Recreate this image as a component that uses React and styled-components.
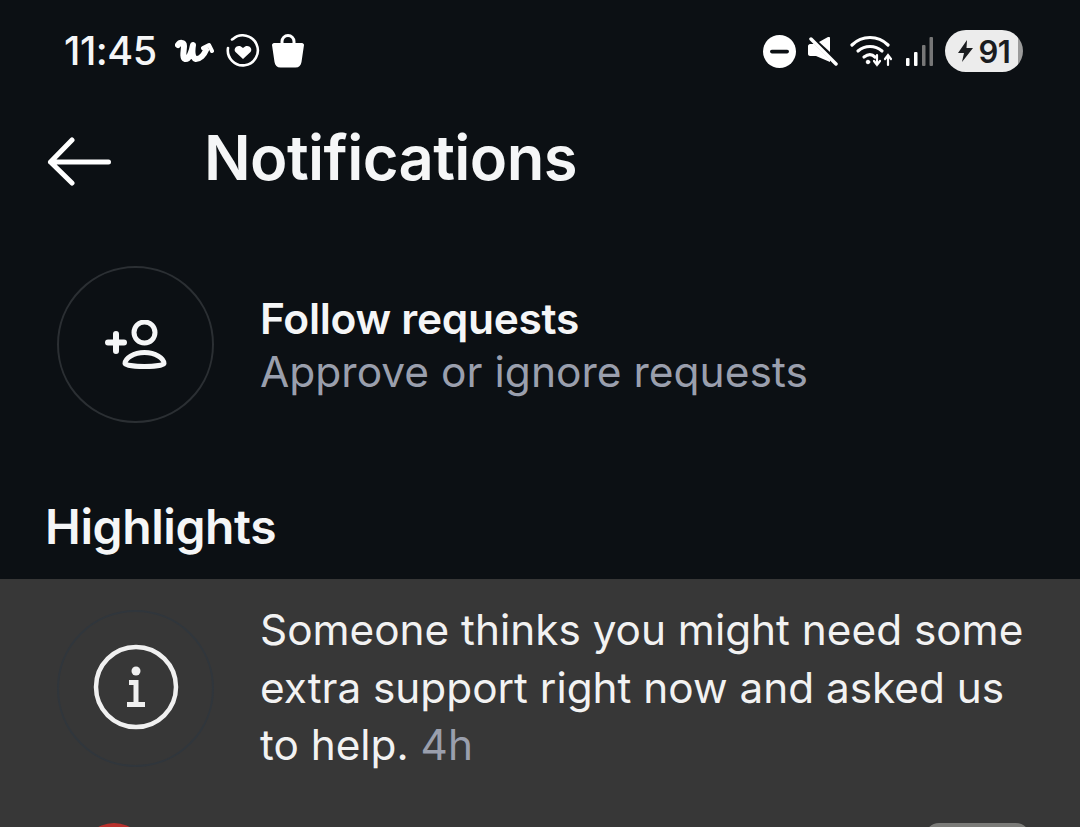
import React from "react";
import styled, { createGlobalStyle } from "styled-components";

const GlobalStyle = createGlobalStyle`
    html, body {
        margin: 0;
        padding: 0;
        background: #0c1014;
    }
`;

const Page = styled.div`
    width: 1080px;
    height: 827px;
    overflow: hidden;
    background: #0c1014;
    color: #f5f6f7;
    font-family: Inter, Roboto, sans-serif;
`;

const StatusBar = styled.div`
    height: 102px;
    padding: 0 57px 0 64px;
    box-sizing: border-box;
    display: flex;
    align-items: center;
    justify-content: space-between;
`;

const LeftIcons = styled.div`
    display: flex;
    align-items: center;
    gap: 12px;
`;

const RightIcons = styled.div`
    display: flex;
    align-items: center;
    gap: 12px;
`;

const Clock = styled.span`
    font-size: 39.5px;
    font-weight: 500;
    letter-spacing: -0.5px;
    margin-right: 6px;
`;

const Battery = styled.div`
    width: 78px;
    height: 42px;
    border-radius: 21px;
    background: linear-gradient(90deg, #ececec 93%, #9b9b9b 93%);
    color: #1a1c1f;
    display: flex;
    align-items: center;
    justify-content: center;
    gap: 6px;
    font-size: 31px;
    font-weight: 600;
    letter-spacing: -0.5px;
`;

const Header = styled.div`
    height: 112px;
    padding-left: 47px;
    display: flex;
    align-items: center;
    gap: 93px;
`;

const Title = styled.h1`
    margin: 0;
    font-size: 61.5px;
    font-weight: 600;
    letter-spacing: -0.6px;
    line-height: 1;
`;

const Row = styled.div`
    display: flex;
    align-items: center;
    gap: 46px;
    padding-left: 57px;
`;

const FollowRow = styled(Row)`
    margin-top: 52px;
`;

const Circle = styled.div`
    width: 157px;
    height: 157px;
    flex: none;
    box-sizing: border-box;
    border-radius: 50%;
    border: 2px solid ${({ $line }) => $line};
    display: flex;
    align-items: center;
    justify-content: center;
`;

const RowTitle = styled.div`
    font-size: 42.5px;
    font-weight: 600;
    letter-spacing: -0.3px;
    line-height: 53px;
`;

const RowSub = styled.div`
    font-size: 42.5px;
    line-height: 53px;
    color: #9a9fad;
`;

const SectionTitle = styled.h2`
    margin: 77px 0 0 45px;
    font-size: 48px;
    font-weight: 600;
    letter-spacing: -0.4px;
    line-height: 53px;
`;

const Highlight = styled.div`
    margin-top: 26px;
    height: 260px;
    background: #373737;
    position: relative;
`;

const HighlightRow = styled(Row)`
    padding-top: 22px;
    align-items: flex-start;
`;

const HighlightIcon = styled(Circle)`
    margin-top: 9px;

    svg {
        filter: blur(0.7px);
        margin-bottom: 3px;
    }
`;

const Message = styled.div`
    font-size: 42.3px;
    line-height: 57.5px;
    color: #f2f2f2;
    width: 780px;
`;

const Time = styled.span`
    color: #9a9fad;
`;

const PeekRow = styled.div`
    position: absolute;
    left: 0;
    right: 0;
    top: 244px;
    padding: 0 50px 0 81px;
    display: flex;
    justify-content: space-between;
`;

const PeekAvatar = styled.div`
    width: 66px;
    height: 66px;
    border-radius: 50%;
    background: #b8302c;
`;

const PeekButton = styled.div`
    width: 105px;
    height: 60px;
    border-radius: 14px;
    background: #7b7b78;
`;

const WovenLogo = () => (
    <svg width="39" height="28" viewBox="0 0 39 28" fill="none" stroke="#fff" strokeLinecap="round" strokeLinejoin="round">
        <path d="M3 8c2-3 6-3 6 1 0 4-2 12 1 13 4 1 7-8 8-14-1 6-1 13 3 14 4 0 8-4 10-9" strokeWidth="6" />
        <path d="M28 11l6-3 3 6" strokeWidth="4" />
    </svg>
);

const HeartRing = () => (
    <svg width="34" height="34" viewBox="0 0 34 34" fill="none">
        <path d="M7 5a15 15 0 1 1-5 9M9 3.500l-3 2" stroke="#fff" strokeWidth="2.600" strokeLinecap="round" />
        <path d="M17 25l-7.500-7c-3-4 3-9 7.500-4 4.500-5 10.500 0 7.500 4z" fill="#fff" />
    </svg>
);

const Bag = () => (
    <svg width="32" height="34" viewBox="0 0 32 34">
        <path d="M10 11V7.500a6 6 0 0 1 12 0V11" fill="none" stroke="#fff" strokeWidth="3" />
        <path d="M2 9h28c1 0 2 1 2 2l-2.500 17c-.5 3.500-2.500 5.500-6 5.500h-15c-3.500 0-5.500-2-6-5.500L0 11c0-1 1-2 2-2z" fill="#fff" />
    </svg>
);

const DoNotDisturb = () => (
    <svg width="33" height="33" viewBox="0 0 33 33">
        <circle cx="16.500" cy="16.500" r="16.500" fill="#fff" />
        <rect x="7" y="14.800" width="19" height="3.600" rx="1.800" fill="#0c1014" />
    </svg>
);

const Muted = () => (
    <svg width="30" height="29" viewBox="0 0 30 29">
        <path d="M0 9c0-1 1-2 2-2h4l16 16v2L8 19H2c-1 0-2-1-2-2z" fill="#fff" />
        <path d="M11 5l9-5c1-.5 2 0 2 1v14z" fill="#fff" />
        <path d="M3 2l25 25" stroke="#fff" strokeWidth="3.500" strokeLinecap="round" />
    </svg>
);

const Wifi = () => (
    <svg width="44" height="32" viewBox="0 0 44 32" fill="none" stroke="#fff" strokeLinecap="round">
        <path d="M2 10C12 0 28 0 38 10" strokeWidth="3.200" />
        <path d="M8 16c7-6 17-6 24 0" strokeWidth="3.200" />
        <path d="M14 22c4-3 8-3 11 0" strokeWidth="3.200" />
        <circle cx="18" cy="27" r="1.800" fill="#fff" strokeWidth="1" />
        <path d="M27 20v10M24 26l3 4 3-4" strokeWidth="2.200" />
        <path d="M38 30V20M35 24l3-4 3 4" strokeWidth="2.200" />
    </svg>
);

const Signal = () => (
    <svg width="27" height="30" viewBox="0 0 27 30">
        <rect x="0" y="22" width="3.500" height="8" fill="#fff" rx="1" />
        <rect x="8" y="16" width="3.500" height="14" fill="#fff" rx="1" />
        <rect x="16" y="9" width="3.500" height="21" fill="#777" rx="1" />
        <rect x="23.500" y="1" width="3.500" height="29" fill="#777" rx="1" />
    </svg>
);

const Bolt = () => (
    <svg width="15" height="22" viewBox="0 0 15 22">
        <path d="M9 0L0 13h6l-2 9L15 8H8.500z" fill="#1a1c1f" />
    </svg>
);

const BackArrow = () => (
    <svg width="64" height="58" viewBox="0 0 64 58" fill="none" stroke="#fff" strokeWidth="5" strokeLinecap="round" strokeLinejoin="round">
        <path d="M25 11L3.500 33 25 54M3.500 33h58" />
    </svg>
);

const AddPerson = () => (
    <svg width="62" height="49" viewBox="0 0 62 49" fill="none" stroke="#f5f6f7" strokeWidth="5" strokeLinecap="round">
        <circle cx="39.500" cy="12.500" r="10.500" />
        <path d="M39.500 32.500c11 0 19.500 6 19.500 11 0 1.500-9 3-19.500 3s-19.500-1.500-19.500-3c0-5 8.500-11 19.500-11z" />
        <path d="M11 14v17M3 22.500h16" strokeWidth="6" />
    </svg>
);

const InfoIcon = () => (
    <svg width="86" height="86" viewBox="0 0 86 86" fill="none" stroke="#f0f0f0">
        <circle cx="43" cy="43" r="40" strokeWidth="4.500" />
        <circle cx="43" cy="27" r="4.500" fill="#f0f0f0" stroke="none" />
        <path d="M36 38.500h7v22M34 60.500h18" strokeWidth="5" />
    </svg>
);

const App = () => (
    <Page>
        <GlobalStyle />
        <StatusBar>
            <LeftIcons>
                <Clock>11:45</Clock>
                <WovenLogo />
                <HeartRing />
                <Bag />
            </LeftIcons>
            <RightIcons>
                <DoNotDisturb />
                <Muted />
                <Wifi />
                <Signal />
                <Battery>
                    <Bolt />
                    <span>91</span>
                </Battery>
            </RightIcons>
        </StatusBar>
        <Header>
            <BackArrow />
            <Title>Notifications</Title>
        </Header>
        <FollowRow>
            <Circle $line="#2b2f33">
                <AddPerson />
            </Circle>
            <div>
                <RowTitle>Follow requests</RowTitle>
                <RowSub>Approve or ignore requests</RowSub>
            </div>
        </FollowRow>
        <SectionTitle>Highlights</SectionTitle>
        <Highlight>
            <HighlightRow>
                <HighlightIcon $line="#30363c">
                    <InfoIcon />
                </HighlightIcon>
                <Message>
                    Someone thinks you might need some extra support right now and asked us to help. <Time>4h</Time>
                </Message>
            </HighlightRow>
            <PeekRow>
                <PeekAvatar />
                <PeekButton />
            </PeekRow>
        </Highlight>
    </Page>
);

export default App;
